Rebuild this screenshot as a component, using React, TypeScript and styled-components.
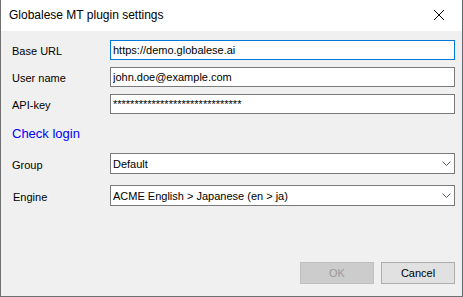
import React from 'react';
import styled, { createGlobalStyle } from 'styled-components';

const GlobalStyle = createGlobalStyle`
  html, body {
    margin: 0;
    padding: 0;
    background: #ffffff;
  }
  body {
    font-family: "Liberation Sans", Arial, sans-serif;
  }
`;

const Window = styled.div`
  box-sizing: border-box;
  width: 463px;
  height: 297px;
  display: flex;
  flex-direction: column;
  border-left: 1px solid #707070;
  border-right: 1px solid #5f6a75;
  border-bottom: 1px solid #707070;
  background: #f0f0f0;
`;

const TitleBar = styled.div`
  height: 31px;
  flex: none;
  display: flex;
  align-items: center;
  justify-content: space-between;
  background: #ffffff;
  padding-left: 8px;
`;

const Title = styled.span`
  font-size: 12px;
  color: #000000;
  padding-bottom: 1px;
`;

const CloseButton = styled.button`
  width: 46px;
  height: 31px;
  border: none;
  background: transparent;
  display: flex;
  align-items: center;
  justify-content: center;
  padding: 0 0 1px 0;
`;

const Body = styled.div`
  flex: 1;
  display: flex;
  flex-direction: column;
  padding: 9px 7px 12px 11px;
`;

const Row = styled.div<{ $top: number; $height: number }>`
  display: grid;
  grid-template-columns: 98px 1fr;
  align-items: center;
  height: ${(p) => p.$height}px;
  margin-top: ${(p) => p.$top}px;
`;

const Label = styled.span<{ $indent?: number }>`
  font-size: 11px;
  color: #000000;
  padding-top: 2px;
  padding-left: ${(p) => p.$indent ?? 0}px;
  white-space: nowrap;
`;

const TextBox = styled.input<{ $focused?: boolean }>`
  box-sizing: border-box;
  height: 20px;
  width: 100%;
  margin: 0;
  padding: 0 2px;
  border: 1px solid ${(p) => (p.$focused ? '#0078d7' : '#7a7a7a')};
  background: #ffffff;
  font-family: "Liberation Sans", Arial, sans-serif;
  font-size: 11px;
  color: #000000;
  outline: none;
`;

const LinkRow = styled.div`
  height: 18px;
  margin-top: 10px;
  display: flex;
  align-items: center;
`;

const Link = styled.a`
  font-size: 13px;
  color: #0000ff;
  text-decoration: none;
  cursor: pointer;
`;

const Combo = styled.div`
  box-sizing: border-box;
  height: 21px;
  display: flex;
  align-items: center;
  justify-content: space-between;
  padding: 0 3px 0 2px;
  border: 1px solid #7a7a7a;
  background: #ffffff;
  font-size: 11px;
  color: #000000;
`;

const Footer = styled.div`
  margin-top: auto;
  display: flex;
  justify-content: flex-end;
  gap: 7px;
`;

const Button = styled.button<{ $disabled?: boolean }>`
  box-sizing: border-box;
  width: 74px;
  height: 22px;
  margin: 0;
  padding: 0;
  font-family: "Liberation Sans", Arial, sans-serif;
  font-size: 11px;
  border: 1px solid ${(p) => (p.$disabled ? '#bfbfbf' : '#adadad')};
  background: ${(p) => (p.$disabled ? '#cccccc' : '#e1e1e1')};
  color: ${(p) => (p.$disabled ? '#9a9a9a' : '#000000')};
`;

const Chevron = () => (
  <svg width="9" height="5" viewBox="0 0 9 5">
    <path d="M0.5 0.5 L4.5 4.5 L8.5 0.5" fill="none" stroke="#606060" strokeWidth="1" />
  </svg>
);

const CloseIcon = () => (
  <svg width="10" height="10" viewBox="0 0 10 10">
    <path d="M0 0 L10 10 M10 0 L0 10" stroke="#000000" strokeWidth="1" />
  </svg>
);

const fields = [
  { label: 'Base URL', value: 'https://demo.globalese.ai', focused: true },
  { label: 'User name', value: 'john.doe@example.com' },
  { label: 'API-key', value: '*'.repeat(30) },
];

const combos = [
  { label: 'Group', value: 'Default', top: 11, indent: 0 },
  { label: 'Engine', value: 'ACME English > Japanese (en > ja)', top: 11, indent: 1 },
];

export default function App() {
  return (
    <>
      <GlobalStyle />
      <Window>
        <TitleBar>
          <Title>Globalese MT plugin settings</Title>
          <CloseButton aria-label="Close">
            <CloseIcon />
          </CloseButton>
        </TitleBar>
        <Body>
          {fields.map((f, i) => (
            <Row key={f.label} $top={i === 0 ? 0 : 7} $height={20}>
              <Label>{f.label}</Label>
              <TextBox readOnly $focused={f.focused} value={f.value} />
            </Row>
          ))}
          <LinkRow>
            <Link>Check login</Link>
          </LinkRow>
          {combos.map((c) => (
            <Row key={c.label} $top={c.top} $height={21}>
              <Label $indent={c.indent}>{c.label}</Label>
              <Combo>
                <span>{c.value}</span>
                <Chevron />
              </Combo>
            </Row>
          ))}
          <Footer>
            <Button $disabled disabled>
              OK
            </Button>
            <Button>Cancel</Button>
          </Footer>
        </Body>
      </Window>
    </>
  );
}
